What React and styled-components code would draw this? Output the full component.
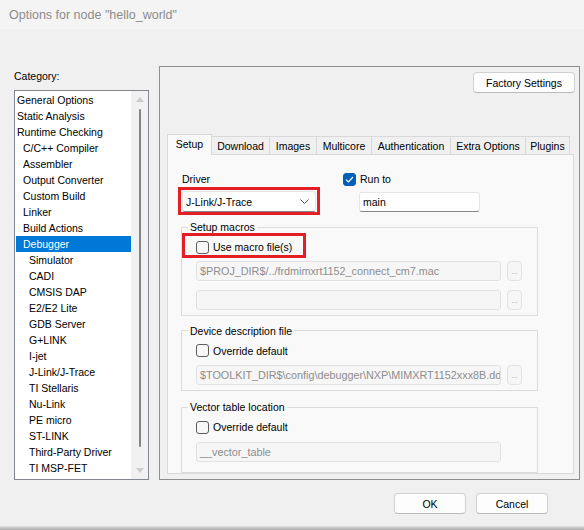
import React from 'react';
import styled, { createGlobalStyle, css } from 'styled-components';

const GlobalStyle = createGlobalStyle`
  html, body {
    margin: 0;
    padding: 0;
    background: #f0f0f0;
  }
  body {
    font-family: "Liberation Sans", Arial, sans-serif;
    font-size: 10.5px;
    color: #000;
  }
  * {
    box-sizing: border-box;
  }
`;

const Window = styled.div`
  width: 584px;
  height: 530px;
  display: flex;
  flex-direction: column;
  background: #f0f0f0;
  overflow: hidden;
`;

const TitleBar = styled.div`
  flex: none;
  height: 29px;
  display: flex;
  align-items: center;
  padding-left: 9px;
  background: #f4f4f4;
  color: #8c8c8c;
  font-size: 12.5px;
`;

const Main = styled.div`
  flex: none;
  height: 451px;
  display: flex;
  gap: 10px;
  padding: 37px 4px 0 14px;
`;

const CategoryColumn = styled.div`
  width: 135px;
  display: flex;
  flex-direction: column;
`;

const CategoryLabel = styled.div`
  height: 24px;
  padding-top: 3px;
  line-height: 14px;
`;

const ListBox = styled.div`
  flex: 1;
  display: flex;
  background: #fff;
  border: 1px solid #828790;
`;

const ListItems = styled.div`
  flex: 1;
  display: flex;
  flex-direction: column;
  padding-top: 1px;
`;

const ListItem = styled.div`
  height: 16px;
  line-height: 16px;
  margin-left: 1px;
  padding-left: ${(p) => 1 + p.$level * 6}px;
  white-space: nowrap;
  ${(p) =>
    p.$selected &&
    css`
      background: #0078d7;
      color: #fff;
    `}
`;

const ScrollBar = styled.div`
  width: 17px;
  display: flex;
  flex-direction: column;
  background: #f1f1f1;
`;

const ScrollArrow = styled.div`
  height: 17px;
  display: flex;
  align-items: center;
  justify-content: center;
`;

const ScrollTrack = styled.div`
  flex: 1;
  display: flex;
  justify-content: center;
  padding: 1px 0 15px;
`;

const ScrollThumb = styled.div`
  width: 2px;
  background: #858585;
  border-radius: 1px;
`;

const OptionsPanel = styled.div`
  flex: 1;
  display: flex;
  flex-direction: column;
  border: 1px solid #8e8e8e;
  padding: 5px 5px 5px 7px;
`;

const ButtonRow = styled.div`
  display: flex;
  justify-content: flex-end;
  margin-right: -1px;
`;

const DialogButton = styled.div`
  width: ${(p) => p.$width}px;
  height: 21px;
  display: flex;
  align-items: center;
  justify-content: center;
  background: #fdfdfd;
  border: 1px solid #d0d0d0;
  border-bottom-color: #bababa;
  border-radius: 4px;
`;

const TabStrip = styled.div`
  position: relative;
  z-index: 1;
  display: flex;
  align-items: flex-end;
  height: 21px;
  margin-top: 41px;
  margin-bottom: -1px;
`;

const Tab = styled.div`
  width: ${(p) => p.$width}px;
  margin-right: -1px;
  text-align: center;
  border: 1px solid #d9d9d9;
  border-bottom: none;
  ${(p) =>
    p.$active
      ? css`
          position: relative;
          z-index: 1;
          height: 21px;
          line-height: 19px;
          background: #f9f9f9;
        `
      : css`
          height: 18px;
          margin-bottom: 1px;
          padding-top: 1px;
          line-height: 16px;
          background: #f0f0f0;
        `}
`;

const TabPanel = styled.div`
  flex: 1;
  background: #f9f9f9;
  border: 1px solid #d9d9d9;
  padding: 16px 0 0 13px;
`;

const TopRow = styled.div`
  display: flex;
  align-items: flex-start;
`;

const DriverColumn = styled.div`
  width: 134px;
  margin-left: 1px;
  display: flex;
  flex-direction: column;
`;

const FieldLabel = styled.div`
  height: 16px;
  line-height: 16px;
`;

const markBox = css`
  &::after {
    content: '';
    position: absolute;
    border: 3px solid #e41e25;
    pointer-events: none;
  }
`;

const Select = styled.div`
  position: relative;
  height: 21px;
  margin-top: 4px;
  display: flex;
  align-items: center;
  justify-content: space-between;
  padding: 0 6px 0 3px;
  background: #fff;
  border: 1px solid #e5e5e5;
  border-bottom-color: #868686;
  border-radius: 3px;
  ${markBox}
  &::after {
    top: -5px;
    left: -5px;
    right: -5px;
    bottom: -4px;
  }
`;

const RunColumn = styled.div`
  margin-left: 27px;
  display: flex;
  flex-direction: column;
`;

const CheckRow = styled.div`
  position: relative;
  display: inline-flex;
  align-items: center;
  gap: 4px;
  height: 16px;
  width: fit-content;
  ${(p) =>
    p.$marked &&
    css`
      ${markBox}
      &::after {
        top: -6px;
        left: -14px;
        right: -14px;
        bottom: -3px;
      }
    `}
`;

const Box = styled.span`
  width: 13px;
  height: 13px;
  flex: none;
  display: flex;
  align-items: center;
  justify-content: center;
  border-radius: 3px;
  border: 1px solid ${(p) => (p.$checked ? '#005fb8' : '#5d5d5d')};
  background: ${(p) => (p.$checked ? '#005fb8' : '#f7f7f7')};
`;

const TextInput = styled.div`
  width: 121px;
  height: 20px;
  margin: 5px 0 0 16px;
  padding: 0 3px;
  line-height: 18px;
  background: #fff;
  border: 1px solid #e5e5e5;
  border-bottom-color: #868686;
  border-radius: 3px;
`;

const Group = styled.fieldset`
  width: 357px;
  margin: ${(p) => p.$top}px 0 0;
  padding: 4px 14px ${(p) => p.$bottom || 5}px;
  border: 1px solid #dcdcdc;
  min-width: 0;
`;

const GroupTitle = styled.legend`
  margin-left: -8px;
  padding: 0 2px;
  line-height: 16px;
`;

const FileRow = styled.div`
  display: flex;
  gap: 6px;
  margin-top: ${(p) => p.$top}px;
`;

const FileInput = styled.div`
  width: 305px;
  height: 20px;
  padding: 0 3px;
  line-height: 18px;
  font-size: 10.8px;
  color: #8d8d8d;
  white-space: nowrap;
  overflow: hidden;
  background: #f6f6f6;
  border: 1px solid #e2e2e2;
  border-radius: 3px;
`;

const BrowseButton = styled.div`
  width: 15px;
  height: 20px;
  display: flex;
  align-items: flex-end;
  justify-content: center;
  padding-bottom: 4px;
  color: #a5a5a5;
  font-size: 8px;
  line-height: 8px;
  background: #f6f6f6;
  border: 1px solid #e2e2e2;
  border-radius: 4px;
`;

const Footer = styled.div`
  flex: none;
  height: 46px;
  display: flex;
  justify-content: flex-end;
  gap: 10px;
  padding: 13px 36px 0 0;
`;

const BottomEdge = styled.div`
  flex: 1;
  background: linear-gradient(#e2e2e2, #a9a9a9);
`;

const categories = [
  ['General Options', 0],
  ['Static Analysis', 0],
  ['Runtime Checking', 0],
  ['C/C++ Compiler', 1],
  ['Assembler', 1],
  ['Output Converter', 1],
  ['Custom Build', 1],
  ['Linker', 1],
  ['Build Actions', 1],
  ['Debugger', 1],
  ['Simulator', 2],
  ['CADI', 2],
  ['CMSIS DAP', 2],
  ['E2/E2 Lite', 2],
  ['GDB Server', 2],
  ['G+LINK', 2],
  ['I-jet', 2],
  ['J-Link/J-Trace', 2],
  ['TI Stellaris', 2],
  ['Nu-Link', 2],
  ['PE micro', 2],
  ['ST-LINK', 2],
  ['Third-Party Driver', 2],
  ['TI MSP-FET', 2],
];

const tabs = [
  ['Setup', 45],
  ['Download', 59],
  ['Images', 48],
  ['Multicore', 56],
  ['Authentication', 80],
  ['Extra Options', 76],
  ['Plugins', 45],
];

const Arrow = ({ up }) => (
  <svg width="8" height="5" viewBox="0 0 8 5">
    <path d={up ? 'M0 5 L4 0 L8 5 Z' : 'M0 0 L4 5 L8 0 Z'} fill="#cdcdcd" />
  </svg>
);

const Checkbox = ({ checked, label, marked }) => (
  <CheckRow $marked={marked}>
    <Box $checked={checked}>
      {checked && (
        <svg width="9" height="7" viewBox="0 0 9 7">
          <path d="M1 3.6 L3.4 6 L8 1" fill="none" stroke="#fff" strokeWidth="1.2" />
        </svg>
      )}
    </Box>
    <span>{label}</span>
  </CheckRow>
);

const Chevron = () => (
  <svg width="9" height="5" viewBox="0 0 9 5">
    <path d="M0.5 0.5 L4.5 4.5 L8.5 0.5" fill="none" stroke="#555" strokeWidth="1" />
  </svg>
);

export default function App() {
  return (
    <Window>
      <GlobalStyle />
      <TitleBar>Options for node "hello_world"</TitleBar>
      <Main>
        <CategoryColumn>
          <CategoryLabel>Category:</CategoryLabel>
          <ListBox>
            <ListItems>
              {categories.map(([name, level]) => (
                <ListItem key={name} $level={level} $selected={name === 'Debugger'}>
                  {name}
                </ListItem>
              ))}
            </ListItems>
            <ScrollBar>
              <ScrollArrow>
                <Arrow up />
              </ScrollArrow>
              <ScrollTrack>
                <ScrollThumb />
              </ScrollTrack>
              <ScrollArrow>
                <Arrow />
              </ScrollArrow>
            </ScrollBar>
          </ListBox>
        </CategoryColumn>

        <OptionsPanel>
          <ButtonRow>
            <DialogButton $width={102}>Factory Settings</DialogButton>
          </ButtonRow>
          <TabStrip>
            {tabs.map(([name, width]) => (
              <Tab key={name} $width={width} $active={name === 'Setup'}>
                {name}
              </Tab>
            ))}
          </TabStrip>
          <TabPanel>
            <TopRow>
              <DriverColumn>
                <FieldLabel>Driver</FieldLabel>
                <Select>
                  <span>J-Link/J-Trace</span>
                  <Chevron />
                </Select>
              </DriverColumn>
              <RunColumn>
                <Checkbox checked label="Run to" />
                <TextInput>main</TextInput>
              </RunColumn>
            </TopRow>

            <Group $top={7}>
              <GroupTitle>Setup macros</GroupTitle>
              <Checkbox label="Use macro file(s)" marked />
              <FileRow $top={5}>
                <FileInput>$PROJ_DIR$/../frdmimxrt1152_connect_cm7.mac</FileInput>
                <BrowseButton>...</BrowseButton>
              </FileRow>
              <FileRow $top={9}>
                <FileInput />
                <BrowseButton>...</BrowseButton>
              </FileRow>
            </Group>

            <Group $top={7}>
              <GroupTitle>Device description file</GroupTitle>
              <Checkbox label="Override default" />
              <FileRow $top={6}>
                <FileInput>$TOOLKIT_DIR$\config\debugger\NXP\MIMXRT1152xxx8B.ddf</FileInput>
                <BrowseButton>...</BrowseButton>
              </FileRow>
            </Group>

            <Group $top={8} $bottom={10}>
              <GroupTitle>Vector table location</GroupTitle>
              <Checkbox label="Override default" />
              <FileRow $top={6}>
                <FileInput>__vector_table</FileInput>
              </FileRow>
            </Group>
          </TabPanel>
        </OptionsPanel>
      </Main>
      <Footer>
        <DialogButton $width={72}>OK</DialogButton>
        <DialogButton $width={72}>Cancel</DialogButton>
      </Footer>
      <BottomEdge />
    </Window>
  );
}
